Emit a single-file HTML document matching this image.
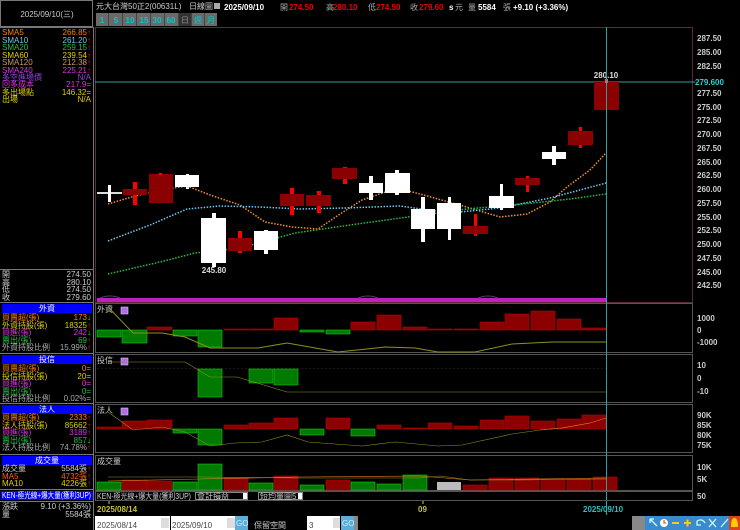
<!DOCTYPE html>
<html><head><meta charset="utf-8"><style>
html,body{margin:0;padding:0;background:#000;width:740px;height:530px;overflow:hidden}
svg{display:block}
text{font-family:"Liberation Sans","Noto Sans CJK TC",sans-serif;font-size:8px}
</style></head><body>
<svg width="740" height="530" viewBox="0 0 740 530" xmlns="http://www.w3.org/2000/svg">
<rect width="740" height="530" fill="#000"/>
<!-- left panel -->
<rect x="0.5" y="0.5" width="92" height="26" fill="none" stroke="#777"/>
<text x="47" y="17" fill="#ccc" text-anchor="middle">2025/09/10(三)</text>
<line x1="93.5" y1="27" x2="93.5" y2="530" stroke="#777"/>
<line x1="0" y1="27.5" x2="94" y2="27.5" stroke="#777"/>
<g font-size="7">
<text x="2" y="35" fill="#ff8000">SMA5</text><text x="91" y="35" fill="#ff8000" text-anchor="end">266.85<tspan fill="#f00">↑</tspan></text>
<text x="2" y="43" fill="#6cc8f0">SMA10</text><text x="91" y="43" fill="#6cc8f0" text-anchor="end">261.20<tspan fill="#f00">↑</tspan></text>
<text x="2" y="50" fill="#20c040">SMA20</text><text x="91" y="50" fill="#20c040" text-anchor="end">259.15<tspan fill="#f00">↑</tspan></text>
<text x="2" y="58" fill="#e0d000">SMA60</text><text x="91" y="58" fill="#e0d000" text-anchor="end">239.54<tspan fill="#f00">↑</tspan></text>
<text x="2" y="65" fill="#c0a060">SMA120</text><text x="91" y="65" fill="#c0a060" text-anchor="end">212.38<tspan fill="#f00">↑</tspan></text>
<text x="2" y="73" fill="#e030e0">SMA240</text><text x="91" y="73" fill="#e030e0" text-anchor="end">225.21<tspan fill="#f00">↑</tspan></text>
<text x="2" y="80" fill="#9040e0">多空進場價</text><text x="91" y="80" fill="#9040e0" text-anchor="end">N/A</text>
<text x="2" y="87" fill="#e030e0">回多成本</text><text x="91" y="87" fill="#e030e0" text-anchor="end">217.9=</text>
<text x="2" y="95" fill="#e0d000">多出場點</text><text x="91" y="95" fill="#e0d000" text-anchor="end">146.32=</text>
<text x="2" y="102" fill="#e0d000">出場</text><text x="91" y="102" fill="#e0d000" text-anchor="end">N/A</text>
</g>
<line x1="0" y1="269.5" x2="94" y2="269.5" stroke="#777"/>
<g fill="#ccc" font-size="7">
<text x="2" y="277">開</text><text x="91" y="277" text-anchor="end">274.50</text>
<text x="2" y="285">高</text><text x="91" y="285" text-anchor="end">280.10</text>
<text x="2" y="292">低</text><text x="91" y="292" text-anchor="end">274.50</text>
<text x="2" y="300">收</text><text x="91" y="300" text-anchor="end">279.60</text>
</g>
<line x1="0" y1="302.5" x2="94" y2="302.5" stroke="#777"/>
<rect x="2" y="304" width="90" height="9" fill="#0000ff"/><text x="47" y="311" fill="#fff" text-anchor="middle">外資</text>
<g font-size="7">
<text x="2" y="320" fill="#ff8000">買賣超(張)</text><text x="91" y="320" fill="#ff8000" text-anchor="end">173<tspan fill="#0f0">↓</tspan></text>
<text x="2" y="328" fill="#e0d000">外資持股(張)</text><text x="91" y="328" fill="#e0d000" text-anchor="end">18325<tspan fill="#f00">↑</tspan></text>
<text x="2" y="335" fill="#e030e0">買進(張)</text><text x="91" y="335" fill="#e030e0" text-anchor="end">242<tspan fill="#0f0">↓</tspan></text>
<text x="2" y="343" fill="#20c040">賣出(張)</text><text x="91" y="343" fill="#20c040" text-anchor="end">69<tspan fill="#f00">↑</tspan></text>
<text x="2" y="350" fill="#aaa">外資持股比例</text><text x="91" y="350" fill="#aaa" text-anchor="end">15.99%<tspan fill="#f00">↑</tspan></text>
</g>
<line x1="0" y1="353.5" x2="94" y2="353.5" stroke="#777"/>
<rect x="2" y="355" width="90" height="9" fill="#0000ff"/><text x="47" y="362" fill="#fff" text-anchor="middle">投信</text>
<g font-size="7">
<text x="2" y="371" fill="#ff8000">買賣超(張)</text><text x="91" y="371" fill="#ff8000" text-anchor="end">0=</text>
<text x="2" y="379" fill="#e0d000">投信持股(張)</text><text x="91" y="379" fill="#e0d000" text-anchor="end">20=</text>
<text x="2" y="386" fill="#e030e0">買進(張)</text><text x="91" y="386" fill="#e030e0" text-anchor="end">0=</text>
<text x="2" y="394" fill="#20c040">賣出(張)</text><text x="91" y="394" fill="#20c040" text-anchor="end">0=</text>
<text x="2" y="401" fill="#aaa">投信持股比例</text><text x="91" y="401" fill="#aaa" text-anchor="end">0.02%=</text>
</g>
<line x1="0" y1="403.5" x2="94" y2="403.5" stroke="#777"/>
<rect x="2" y="405" width="90" height="9" fill="#0000ff"/><text x="47" y="412" fill="#fff" text-anchor="middle">法人</text>
<g font-size="7">
<text x="2" y="420" fill="#ff8000">買賣超(張)</text><text x="91" y="420" fill="#ff8000" text-anchor="end">2333<tspan fill="#f00">↑</tspan></text>
<text x="2" y="428" fill="#e0d000">法人持股(張)</text><text x="91" y="428" fill="#e0d000" text-anchor="end">85662<tspan fill="#f00">↑</tspan></text>
<text x="2" y="435" fill="#e030e0">買進(張)</text><text x="91" y="435" fill="#e030e0" text-anchor="end">3189<tspan fill="#f00">↑</tspan></text>
<text x="2" y="443" fill="#20c040">賣出(張)</text><text x="91" y="443" fill="#20c040" text-anchor="end">857<tspan fill="#0f0">↓</tspan></text>
<text x="2" y="450" fill="#aaa">法人持股比例</text><text x="91" y="450" fill="#aaa" text-anchor="end">74.78%<tspan fill="#f00">↑</tspan></text>
</g>
<line x1="0" y1="454.5" x2="94" y2="454.5" stroke="#777"/>
<rect x="2" y="456" width="90" height="9" fill="#0000ff"/><text x="47" y="463" fill="#fff" text-anchor="middle">成交量</text>
<g font-size="7">
<text x="2" y="471" fill="#ccc">成交量</text><text x="91" y="471" fill="#ccc" text-anchor="end">5584張<tspan fill="#f00">↑</tspan></text>
<text x="2" y="479" fill="#ff6000">MA5</text><text x="91" y="479" fill="#ff6000" text-anchor="end">4732張<tspan fill="#f00">↑</tspan></text>
<text x="2" y="486" fill="#e0d000">MA10</text><text x="91" y="486" fill="#e0d000" text-anchor="end">4226張<tspan fill="#f00">↑</tspan></text>
</g>
<line x1="0" y1="489.5" x2="94" y2="489.5" stroke="#777"/>
<rect x="1" y="491" width="92" height="9" fill="#0000ff"/><text x="2" y="498" fill="#fff" font-size="7" textLength="89" lengthAdjust="spacingAndGlyphs">KEN-極光線+爆大量(獲利3UP)</text>
<line x1="0" y1="501.5" x2="94" y2="501.5" stroke="#777"/>
<text x="2" y="509" fill="#ccc" font-size="7">漲跌</text><text x="91" y="509" fill="#ccc" text-anchor="end" font-size="7">9.10 (+3.36%)</text>
<text x="2" y="517" fill="#ccc" font-size="7">量</text><text x="91" y="517" fill="#ccc" text-anchor="end" font-size="7">5584張</text>

<!-- top title -->
<text x="96" y="9" fill="#ccc" font-size="7.5">元大台灣50正2(00631L)</text>
<text x="189" y="9" fill="#ccc" font-size="7.5">日線圖</text>
<rect x="214" y="3" width="6" height="6" fill="#aaa"/>
<g font-weight="bold" font-size="9">
<text x="224" y="10" fill="#fff">2025/09/10</text>
<text x="280" y="10" fill="#aaa" font-weight="normal" font-size="7">開</text><text x="289" y="10" fill="#e00">274.50</text>
<text x="326" y="10" fill="#aaa" font-weight="normal" font-size="7">高</text><text x="333" y="10" fill="#e00">280.10</text>
<text x="368" y="10" fill="#aaa" font-weight="normal" font-size="7">低</text><text x="376" y="10" fill="#e00">274.50</text>
<text x="410" y="10" fill="#aaa" font-weight="normal" font-size="7">收</text><text x="419" y="10" fill="#e00">279.60</text>
<text x="449" y="10" fill="#fff" font-size="7">s</text><text x="455" y="10" fill="#aaa" font-weight="normal" font-size="7">元</text>
<text x="468" y="10" fill="#aaa" font-weight="normal" font-size="7">量</text><text x="478" y="10" fill="#fff">5584</text>
<text x="503" y="10" fill="#aaa" font-weight="normal" font-size="7">張</text><text x="513" y="10" fill="#fff">+9.10 (+3.36%)</text>
</g>
<g font-size="8.5" font-weight="bold" fill="#00c8d0" text-anchor="middle">
<rect x="96" y="13" width="121" height="13" fill="#6a6a6a"/>
<rect x="179" y="13" width="12" height="13" fill="#333"/>
<g stroke="#444"><line x1="108.5" y1="13" x2="108.5" y2="26"/><line x1="122.5" y1="13" x2="122.5" y2="26"/><line x1="136.5" y1="13" x2="136.5" y2="26"/><line x1="150.5" y1="13" x2="150.5" y2="26"/><line x1="164.5" y1="13" x2="164.5" y2="26"/><line x1="178.5" y1="13" x2="178.5" y2="26"/><line x1="191.5" y1="13" x2="191.5" y2="26"/><line x1="204.5" y1="13" x2="204.5" y2="26"/></g>
<text x="102" y="23">1</text><text x="116" y="23">5</text><text x="130" y="23">10</text><text x="144" y="23">15</text><text x="157" y="23">30</text><text x="171" y="23">60</text>
<text x="185" y="23" fill="#888" font-weight="normal" font-size="7">日</text><text x="198" y="23" font-weight="normal" font-size="7">週</text><text x="211" y="23" font-weight="normal" font-size="7">月</text>
</g>

<rect x="95.5" y="27.5" width="597" height="275" fill="none" stroke="#5a2a35"/>
<line x1="95" y1="82" x2="695" y2="82" stroke="#30a0a0"/>
<text x="695" y="85" fill="#2ad0d0" font-weight="bold" font-size="8">279.600</text>
<g fill="#ccc" font-weight="bold" font-size="7.5">
<text x="697" y="41">287.50</text><text x="697" y="55">285.00</text><text x="697" y="69">282.50</text>
<text x="697" y="96">277.50</text><text x="697" y="110">275.00</text><text x="697" y="123">272.50</text>
<text x="697" y="137">270.00</text><text x="697" y="151">267.50</text><text x="697" y="165">265.00</text>
<text x="697" y="178">262.50</text><text x="697" y="192">260.00</text><text x="697" y="206">257.50</text>
<text x="697" y="220">255.00</text><text x="697" y="233">252.50</text><text x="697" y="247">250.00</text>
<text x="697" y="261">247.50</text><text x="697" y="275">245.00</text><text x="697" y="288">242.50</text>
</g>
<polyline fill="none" stroke="#f09030" stroke-width="1.5" stroke-dasharray="1.5 1.5" points="108,204 135,196 162,190 187,186 210,195 240,205 265,222 292,227 318,229 340,214 362,200 397,188 420,194 463,206 500,217 527,214 550,202 567,187 590,170 606,153"/>
<polyline fill="none" stroke="#70c8f0" stroke-width="1.5" stroke-dasharray="1.5 1.5" points="108,241 150,225 187,209 220,206 260,207 300,209 345,208 400,206 450,213 500,208 550,198 580,190 606,183"/>
<polyline fill="none" stroke="#20c040" stroke-width="1.5" stroke-dasharray="1.5 1.5" points="108,274 160,262 195,253 240,248 295,233 350,225 415,216 467,209 533,203 570,199 606,194"/>
<g>
<rect x="97" y="192" width="25" height="2" fill="#ddd"/><rect x="108" y="185" width="3" height="17" fill="#fff"/>
<rect x="133" y="182" width="4" height="23" fill="#f00"/><rect x="123" y="189" width="24" height="6" fill="#8b0000"/>
<rect x="149" y="174" width="24" height="29" fill="#8b0000"/><rect x="159" y="173" width="3" height="2" fill="#f00"/>
<rect x="175" y="175" width="24" height="12" fill="#fff"/><rect x="186" y="174" width="3" height="15" fill="#fff"/>
<rect x="201" y="218" width="25" height="45" fill="#fff"/><rect x="212" y="213" width="4" height="54" fill="#fff"/>
<rect x="238" y="231" width="4" height="22" fill="#f00"/><rect x="228" y="238" width="24" height="13" fill="#8b0000"/>
<rect x="254" y="231" width="24" height="19" fill="#fff"/><rect x="264" y="230" width="4" height="24" fill="#fff"/>
<rect x="290" y="188" width="4" height="27" fill="#f00"/><rect x="280" y="194" width="24" height="12" fill="#8b0000"/>
<rect x="317" y="191" width="4" height="22" fill="#f00"/><rect x="306" y="195" width="25" height="11" fill="#8b0000"/>
<rect x="343" y="167" width="4" height="17" fill="#f00"/><rect x="332" y="168" width="25" height="11" fill="#8b0000"/>
<rect x="359" y="183" width="24" height="10" fill="#fff"/><rect x="369" y="176" width="4" height="24" fill="#fff"/>
<rect x="385" y="173" width="25" height="20" fill="#fff"/><rect x="395" y="170" width="4" height="25" fill="#fff"/>
<rect x="411" y="209" width="24" height="20" fill="#fff"/><rect x="421" y="197" width="4" height="45" fill="#fff"/>
<rect x="437" y="203" width="24" height="26" fill="#fff"/><rect x="448" y="197" width="3" height="43" fill="#fff"/>
<rect x="474" y="214" width="3" height="22" fill="#f00"/><rect x="463" y="226" width="25" height="8" fill="#8b0000"/>
<rect x="489" y="196" width="25" height="12" fill="#fff"/><rect x="500" y="184" width="3" height="26" fill="#fff"/>
<rect x="526" y="176" width="3" height="16" fill="#f00"/><rect x="515" y="178" width="25" height="7" fill="#8b0000"/>
<rect x="542" y="152" width="24" height="7" fill="#fff"/><rect x="552" y="146" width="4" height="19" fill="#fff"/>
<rect x="579" y="127" width="3" height="21" fill="#f00"/><rect x="568" y="131" width="25" height="14" fill="#8b0000"/>
<rect x="594" y="82" width="25" height="28" fill="#8b0000"/><rect x="605" y="79" width="3" height="4" fill="#f55"/>
</g>
<text x="606" y="78" fill="#ddd" font-weight="bold" text-anchor="middle">280.10</text>
<text x="214" y="273" fill="#ddd" font-weight="bold" text-anchor="middle">245.80</text>
<rect x="97" y="298" width="510" height="4" fill="#c020c0"/>
<path d="M100 298 Q110 294 120 298 M358 298 Q368 294 378 298 M478 298 Q488 294 498 298" stroke="#446" fill="none"/>

<g fill="none" stroke="#555">
<rect x="95.5" y="303.5" width="597" height="49"/>
<rect x="95.5" y="354.5" width="597" height="48"/>
<rect x="95.5" y="404.5" width="597" height="48"/>
<rect x="95.5" y="455.5" width="597" height="35"/>
</g>
<g fill="#ccc" font-weight="bold" font-size="7.5">
<text x="697" y="321">1000</text><text x="697" y="333">0</text><text x="697" y="345">-1000</text>
<text x="697" y="368">10</text><text x="697" y="381">0</text><text x="697" y="394">-10</text>
<text x="697" y="418">90K</text><text x="697" y="428">85K</text><text x="697" y="438">80K</text><text x="697" y="448">75K</text>
<text x="697" y="470">10K</text><text x="697" y="482">5K</text><text x="697" y="499">50</text>
</g>
<g fill="#ccc" font-size="7"><text x="97" y="312">外資</text><text x="97" y="363">投信</text><text x="97" y="413">法人</text><text x="97" y="464">成交量</text></g>
<g fill="#b070e0" stroke="#e0c0ff" stroke-width="0.6"><rect x="121" y="307" width="7" height="7"/><rect x="121" y="358" width="7" height="7"/><rect x="121" y="408" width="7" height="7"/></g>

<g stroke-width="0.6">
<g fill="#007a00" stroke="#1c1">
<rect x="97" y="330" width="24" height="7"/><rect x="122" y="330" width="25" height="13"/><rect x="173" y="330" width="24" height="6"/><rect x="198" y="330" width="24" height="17"/><rect x="300" y="330" width="24" height="2"/><rect x="326" y="330" width="24" height="4"/>
</g>
<g fill="#8b0000" stroke="#b00">
<rect x="147" y="327" width="25" height="3"/><rect x="224" y="329" width="24" height="1"/><rect x="249" y="329" width="24" height="1"/><rect x="274" y="318" width="24" height="12"/><rect x="351" y="322" width="24" height="8"/><rect x="377" y="315" width="24" height="15"/><rect x="403" y="327" width="24" height="3"/><rect x="428" y="329" width="24" height="1"/><rect x="454" y="329" width="24" height="1"/><rect x="480" y="322" width="24" height="8"/><rect x="505" y="314" width="24" height="16"/><rect x="531" y="311" width="24" height="19"/><rect x="557" y="319" width="24" height="11"/><rect x="582" y="328" width="24" height="2"/>
</g>
<polyline fill="none" stroke="#909020" stroke-width="1" points="108,307 133,333 162,333 185,337 210,348 258,348 287,343 338,352 385,347 415,348 438,352 475,352 512,344 552,342 606,342"/>
<line x1="97" y1="368.5" x2="606" y2="368.5" stroke="#333" stroke-dasharray="2 2"/>
<g fill="#007a00" stroke="#1c1"><rect x="198" y="369" width="24" height="28"/><rect x="249" y="369" width="24" height="14"/><rect x="274" y="369" width="24" height="16"/></g>
<polyline fill="none" stroke="#909020" points="108,362 185,362 210,377 237,377 287,392 606,392"/>
<g fill="#007a00" stroke="#1c1"><rect x="173" y="429" width="24" height="4"/><rect x="198" y="429" width="24" height="16"/><rect x="300" y="429" width="24" height="6"/><rect x="351" y="429" width="24" height="7"/></g>
<g fill="#8b0000" stroke="#b00">
<rect x="97" y="427" width="24" height="2"/><rect x="122" y="421" width="25" height="8"/><rect x="147" y="420" width="25" height="9"/><rect x="224" y="425" width="24" height="4"/><rect x="249" y="423" width="24" height="6"/><rect x="274" y="418" width="24" height="11"/><rect x="326" y="418" width="24" height="11"/><rect x="377" y="425" width="24" height="4"/><rect x="403" y="428" width="24" height="1"/><rect x="428" y="423" width="24" height="6"/><rect x="454" y="426" width="24" height="3"/><rect x="480" y="420" width="24" height="9"/><rect x="505" y="416" width="24" height="13"/><rect x="531" y="421" width="24" height="8"/><rect x="557" y="419" width="24" height="10"/><rect x="582" y="415" width="24" height="14"/>
</g>
<polyline fill="none" stroke="#909020" points="108,412 133,430 162,427 185,432 210,446 235,443 262,442 287,435 308,442 362,446 395,442 438,446 462,445 512,434 540,430 562,428 590,423"/>
<polyline fill="none" stroke="#e08020" points="540,430 562,428 590,423 606,418"/>
<g fill="#007a00" stroke="#1c1">
<rect x="97" y="482" width="24" height="8"/><rect x="173" y="482" width="24" height="8"/><rect x="198" y="464" width="24" height="26"/><rect x="249" y="483" width="24" height="7"/><rect x="300" y="485" width="24" height="5"/><rect x="351" y="482" width="24" height="8"/><rect x="377" y="484" width="24" height="6"/><rect x="403" y="475" width="24" height="15"/>
</g>
<rect x="437" y="482" width="24" height="8" fill="#bbb"/>
<g fill="#8b0000" stroke="#b00">
<rect x="122" y="480" width="25" height="10"/><rect x="147" y="481" width="25" height="9"/><rect x="224" y="478" width="24" height="12"/><rect x="274" y="476" width="24" height="14"/><rect x="326" y="480" width="24" height="10"/><rect x="463" y="485" width="24" height="5"/><rect x="489" y="478" width="24" height="12"/><rect x="515" y="478" width="24" height="12"/><rect x="541" y="479" width="24" height="11"/><rect x="567" y="479" width="24" height="11"/><rect x="593" y="477" width="24" height="13"/>
</g>
<polyline fill="none" stroke="#909020" points="108,477 200,477 300,478 420,478 440,476 470,480 520,480 606,479"/>
<polyline fill="none" stroke="#e08020" points="108,481 200,479 300,477 420,476 470,480 606,478"/>
</g>

<line x1="606.5" y1="27" x2="606.5" y2="515" stroke="#30a0a0"/>

<rect x="95.5" y="491.5" width="597" height="9" fill="none" stroke="#555"/>
<text x="97" y="499" fill="#ccc" font-size="7" textLength="94" lengthAdjust="spacingAndGlyphs">KEN-極光線+爆大量(獲利3UP)</text>
<rect x="195.5" y="492.5" width="52" height="7" fill="#000" stroke="#888"/><text x="197" y="499" fill="#ccc" font-size="6.5">會計損益</text><rect x="243" y="493" width="4" height="6" fill="#fff"/>
<rect x="258.5" y="492.5" width="44" height="7" fill="#000" stroke="#888"/><text x="260" y="499" fill="#ccc" font-size="6.5">短均量圖5</text><rect x="298" y="493" width="4" height="6" fill="#fff"/>
<line x1="109" y1="501" x2="109" y2="504" stroke="#cc3"/><line x1="423" y1="501" x2="423" y2="504" stroke="#cc3"/>
<text x="97" y="512" fill="#c8c030" font-weight="bold" font-size="7.5">2025/08/14</text>
<text x="418" y="512" fill="#c8c030" font-weight="bold" font-size="7.5">09</text>
<text x="583" y="512" fill="#2ac0c0" font-weight="bold" font-size="7.5">2025/09/10</text>
<rect x="95" y="516" width="75" height="14" fill="#fff"/><text x="97" y="528" fill="#444" font-size="11">2025/08/14</text><rect x="161" y="518" width="8" height="10" fill="#ddd"/>
<text x="172" y="527" fill="#ccc" font-size="9">~</text>
<rect x="171" y="516" width="64" height="14" fill="#fff"/><text x="172" y="528" fill="#444" font-size="11">2025/09/10</text><rect x="227" y="518" width="8" height="10" fill="#ddd"/>
<rect x="235" y="516" width="13" height="14" fill="#5aaed8"/><text x="236" y="526" fill="#cef" font-size="6.5">GO</text>
<text x="254" y="528" fill="#ccc" font-size="12">保留空間</text>
<rect x="307" y="516" width="33" height="14" fill="#fff"/><text x="309" y="528" fill="#444" font-size="11">3</text><rect x="333" y="518" width="7" height="10" fill="#ddd"/>
<rect x="341" y="516" width="13" height="14" fill="#5aaed8"/><text x="342" y="526" fill="#cef" font-size="6.5">GO</text>
<rect x="354" y="516" width="4" height="14" fill="#888"/>
<rect x="632" y="516" width="108" height="14" fill="#3a8ad0"/>
<rect x="632" y="516" width="13" height="14" fill="#888"/>
<g fill="none" stroke="#cfe" stroke-width="1.3">
<path d="M650 519 L657 526 M650 519 L650 523 M650 519 L654 519"/>
<circle cx="664" cy="523" r="4" fill="#fff" stroke="none"/><path d="M664 520 V523 H666" stroke="#e60"/>
<path d="M672 523 H679" stroke="#fc0" stroke-width="2"/>
<path d="M684 523 H691 M687.5 519.5 V526.5" stroke="#fc0" stroke-width="2"/>
<path d="M697 521 Q702 518 705 523 M697 521 V525 H701"/>
<path d="M709 519 L716 527 M716 519 L709 527"/>
<path d="M721 527 L728 519"/>
</g>
<rect x="729" y="516" width="11" height="14" fill="#e04020"/><path d="M731 527 Q731 518 734.5 518 Q738 518 738 527 Z" fill="#fc0"/>
</svg>
</body></html>
